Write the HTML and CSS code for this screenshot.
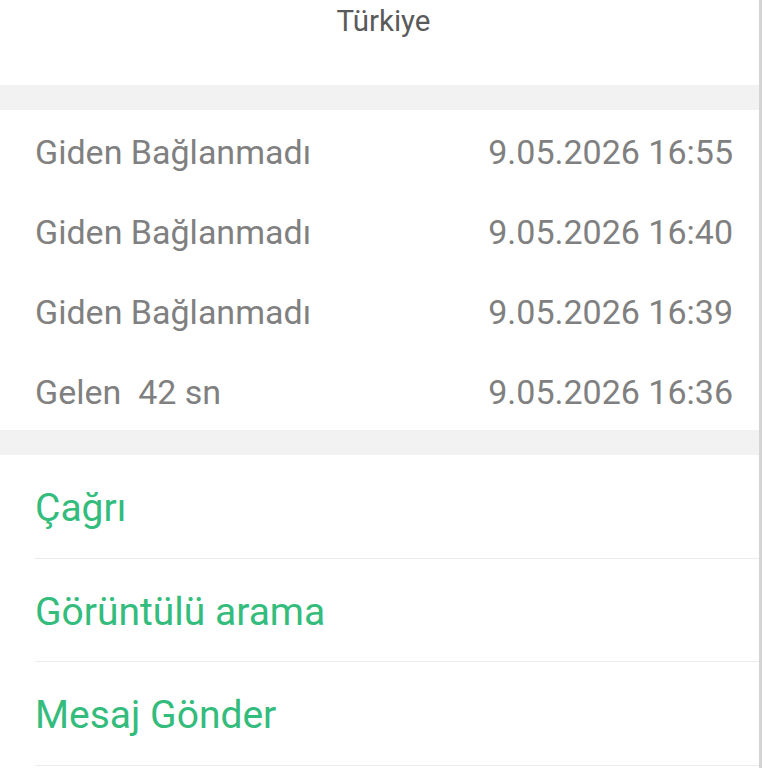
FILE: index.html
```html
<!DOCTYPE html>
<html>
<head>
<meta charset="utf-8">
<link rel="stylesheet" href="styles.css">
</head>
<body>
<div class="page">
  <div class="content">
    <div class="country">Türkiye</div>
    <div class="band"></div>
    <div class="calls">
      <div class="call"><span class="type">Giden Bağlanmadı</span><span class="time">9.05.2026 16:55</span></div>
      <div class="call"><span class="type">Giden Bağlanmadı</span><span class="time">9.05.2026 16:40</span></div>
      <div class="call"><span class="type">Giden Bağlanmadı</span><span class="time">9.05.2026 16:39</span></div>
      <div class="call"><span class="type">Gelen&nbsp; 42 sn</span><span class="time">9.05.2026 16:36</span></div>
    </div>
    <div class="band"></div>
    <div class="actions">
      <div class="action">Çağrı</div>
      <div class="action">Görüntülü arama</div>
      <div class="action">Mesaj Gönder</div>
    </div>
  </div>
  <div class="scrollbar"></div>
</div>
</body>
</html>
```

FILE: styles.css
```css
html, body {
  margin: 0;
  padding: 0;
  background: #ffffff;
}
body {
  font-family: Roboto, "Noto Sans", sans-serif;
  width: 768px;
  height: 768px;
  overflow: hidden;
}
.page {
  display: flex;
  height: 768px;
}
.content {
  flex: 1;
  min-width: 0;
}
.scrollbar {
  width: 3px;
  background: #d4d4d4;
  margin-right: 6px;
}
.country {
  height: 85px;
  display: flex;
  justify-content: center;
  align-items: flex-start;
  padding-top: 4px;
  box-sizing: border-box;
  font-size: 29.5px;
  color: #5a5a5a;
  padding-left: 8px;
}
.band {
  height: 25px;
  background: #f2f2f2;
}
.calls {
  display: flex;
  flex-direction: column;
}
.call {
  height: 80px;
  display: flex;
  justify-content: space-between;
  align-items: center;
  padding: 4px 26px 0 35px;
  box-sizing: border-box;
  font-size: 34px;
  color: #808080;
}
.actions {
  display: flex;
  flex-direction: column;
  padding-left: 35px;
}
.action {
  height: 103.5px;
  box-sizing: border-box;
  border-bottom: 1.5px solid #ececec;
  display: flex;
  align-items: center;
  padding-top: 4px;
  font-size: 39px;
  color: #33bc7c;
}
```
